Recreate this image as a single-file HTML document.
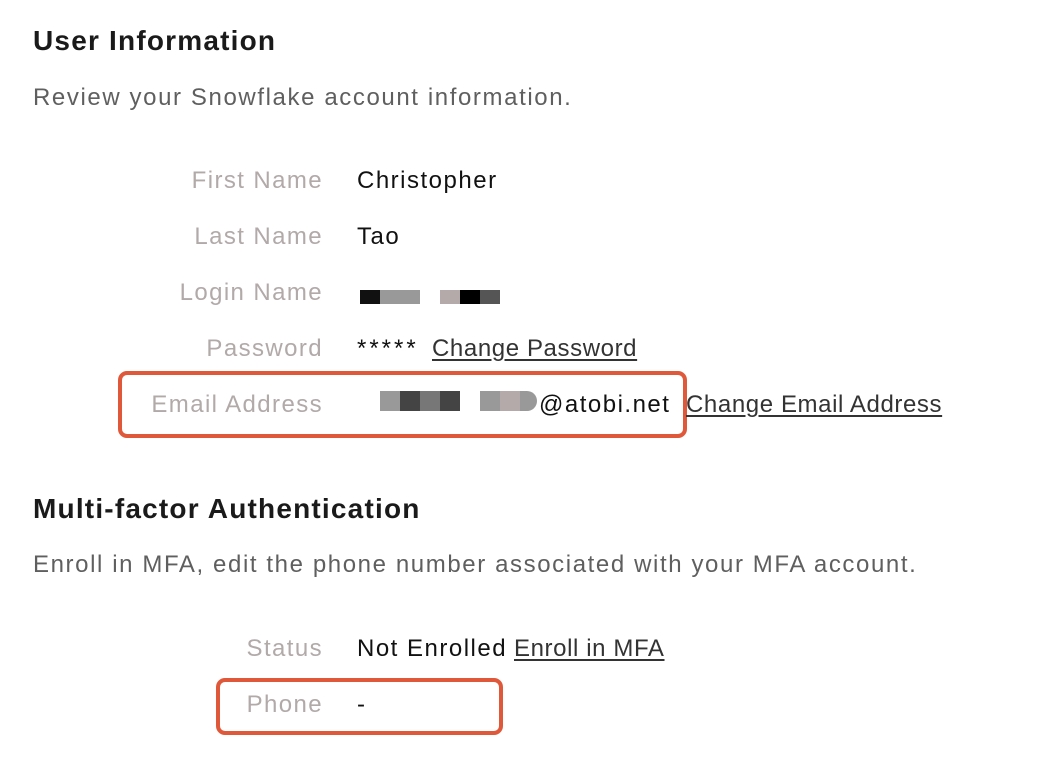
<!DOCTYPE html>
<html><head><meta charset="utf-8"><style>
body{margin:0;width:1040px;height:760px;background:#fff;font-family:"Liberation Sans",sans-serif;position:relative;overflow:hidden}
.a{position:absolute;white-space:nowrap}
h{position:absolute;left:33px;font-weight:bold;font-size:28px;color:#1a1a1a;letter-spacing:1.2px;white-space:nowrap}
.d{left:33px;font-size:24px;color:#5f5f5f;letter-spacing:1.6px}
.l{width:200px;left:123px;text-align:right;font-size:24px;color:#b2a9a9;letter-spacing:1.4px}
.v{left:357px;font-size:24px;color:#111;letter-spacing:1.5px}
u{color:#333;text-decoration:underline;text-underline-offset:3px;letter-spacing:0.6px}
.b{position:absolute}
.box{position:absolute;border:4px solid #e0583a;border-radius:9px}
</style></head><body>
<h style="top:25px">User Information</h>
<div class="a d" style="top:84px">Review your Snowflake account information.</div>
<div class="a l" style="top:167px">First Name</div><div class="a v" style="top:167px">Christopher</div>
<div class="a l" style="top:223px">Last Name</div><div class="a v" style="top:223px">Tao</div>
<div class="a l" style="top:279px">Login Name</div>
<div class="b" style="left:360px;top:290px;width:20px;height:14px;background:#111"></div>
<div class="b" style="left:380px;top:290px;width:40px;height:14px;background:#999"></div>
<div class="b" style="left:440px;top:290px;width:20px;height:14px;background:#b5aaaa"></div>
<div class="b" style="left:460px;top:290px;width:20px;height:14px;background:#000"></div>
<div class="b" style="left:480px;top:290px;width:20px;height:14px;background:#555"></div>
<div class="a l" style="top:335px">Password</div><div class="a v" style="top:335px;letter-spacing:3px">*****</div><div class="a v" style="top:335px;left:432px"><u>Change Password</u></div>
<div class="box" style="left:118px;top:371px;width:561px;height:59px"></div>
<div class="a l" style="top:391px">Email Address</div>
<div class="b" style="left:380px;top:391px;width:20px;height:20px;background:#999"></div>
<div class="b" style="left:400px;top:391px;width:20px;height:20px;background:#444"></div>
<div class="b" style="left:420px;top:391px;width:20px;height:20px;background:#777"></div>
<div class="b" style="left:440px;top:391px;width:20px;height:20px;background:#444"></div>
<div class="b" style="left:480px;top:391px;width:20px;height:20px;background:#999"></div>
<div class="b" style="left:500px;top:391px;width:20px;height:20px;background:#b5aaaa"></div>
<div class="b" style="left:520px;top:391px;width:17px;height:20px;background:#999;border-radius:0 10px 10px 0"></div>
<div class="a v" style="top:391px;left:539px">@atobi.net</div>
<div class="a v" style="top:391px;left:686px"><u>Change Email Address</u></div>
<h style="top:493px">Multi-factor Authentication</h>
<div class="a d" style="top:551px">Enroll in MFA, edit the phone number associated with your MFA account.</div>
<div class="a l" style="top:635px">Status</div><div class="a v" style="top:635px">Not Enrolled</div><div class="a v" style="top:635px;left:514px"><u>Enroll in MFA</u></div>
<div class="box" style="left:216px;top:678px;width:279px;height:49px"></div>
<div class="a l" style="top:691px">Phone</div><div class="a v" style="top:691px">-</div>
</body></html>
